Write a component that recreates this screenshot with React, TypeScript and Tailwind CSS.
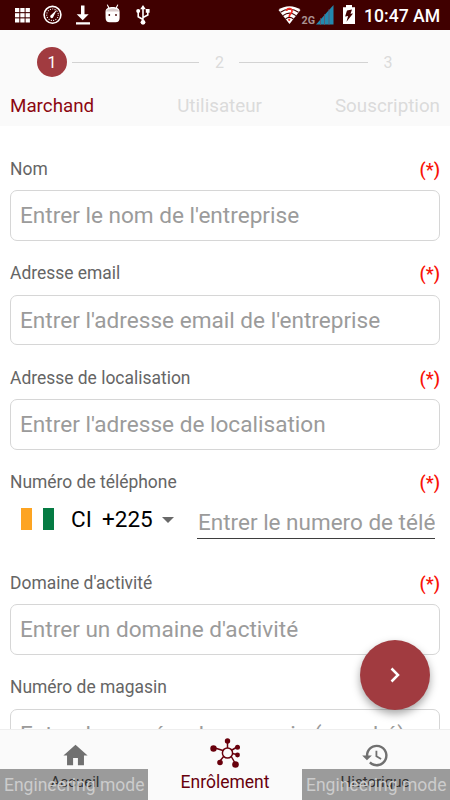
// App.tsx
// Merchant enrolment screen, first step of the wizard

import type { ReactNode } from 'react'

interface FieldProps {
  label: string
  placeholder: string
  required?: boolean
}

function FieldLabel({ label, required }: { label: string; required?: boolean }) {
  return (
    <div className="flex h-[21px] items-center justify-between pt-px text-[17.45px] leading-[21px] text-[#656565]">
      <span>{label}</span>
      {required && <span className="text-[18px] font-medium text-[#f91307]">(*)</span>}
    </div>
  )
}

function Field({ label, placeholder, required }: FieldProps) {
  return (
    <div className="mb-[22px]">
      <FieldLabel label={label} required={required} />
      <div className="mt-[11px] flex h-[50.5px] items-center rounded-[7px] border border-[#d6d6d6] px-[9px] pt-0.5 text-[22.6px] whitespace-nowrap text-[#9b9b9b]">
        {placeholder}
      </div>
    </div>
  )
}

function StatusBar() {
  return (
    <header className="flex h-[30px] shrink-0 items-center justify-between bg-[#400000] text-white">
      <svg width="160" height="30" viewBox="0 0 160 30" fill="#fff">
        {/* App grid */}
        {[15, 20.3, 25.6].map((x) =>
          [8, 13.2, 18.4].map((y) => <rect key={`${x}-${y}`} x={x} y={y} width="4.3" height="4.1" />),
        )}
        {/* Gauge */}
        <circle cx="52.5" cy="14.8" r="8.4" fill="none" stroke="#fff" strokeWidth="1.6" />
        <circle cx="52.5" cy="14.8" r="5.8" fill="none" stroke="#fff" strokeWidth="1.1" strokeDasharray="1 1.4" />
        <path d="m50.6 15.6 6.4-6-4 8a1.5 1.5 0 0 1-2.4-2z" />
        {/* Download */}
        <path d="M81 5.5h3.5v8.7h4.2l-6 6-6-6H81zM76 22.2h14v2.2H76z" />
        {/* Android head */}
        <path d="M105.500 12c0-2 1-3.500 2.600-4.200L106.800 4.800l.9-.4 1.700 3c2-.6 4.300-.6 6.300 0l1.700-3 .9.4-1.300 3c1.600.7 2.600 2.200 2.600 4.200v6q0 4.200-4 4.200h-6q-4 0-4-4.200z" />
        <path d="M106 11.500c0-4 13-4 13 0z" fill="#d9cccc" />
        <circle cx="109.300" cy="15" r=".9" fill="#400000" />
        <circle cx="116" cy="15" r=".9" fill="#400000" />
        {/* USB */}
        <path d="M143 8v14M143 19.500l-4.800-2.800v-5M143 17.500l4.800-2.600v-4" fill="none" stroke="#fff" strokeWidth="1.6" />
        <path d="m143 5 2.800 4.200h-5.600zM145.800 9h3.800v3.800h-3.800z" />
        <circle cx="138.200" cy="11" r="2" />
        <circle cx="143" cy="22.300" r="2.400" />
      </svg>
      <div className="flex items-center">
        <svg width="86" height="30" viewBox="276 0 86 30">
          {/* Wifi */}
          <path d="M278.500 10c6-5 16-5 22 0l-11 14z" fill="#fff" />
          <path d="M280.500 12.300c5.500-4 12.500-4 18 0M283 15.600c4-3 9-3 13 0M285.500 19c2.500-2 5.500-2 8 0" fill="none" stroke="#400000" strokeWidth="1.100" />
          <path d="M286.500 11c.5-3.500 6-3 5.500.5-.3 2-2.800 2.200-2.800 5.500" fill="none" stroke="#f12b24" strokeWidth="1.700" />
          <circle cx="289.200" cy="19.800" r="1.100" fill="#f12b24" />
          <text x="301.500" y="24" fontSize="11.500" fontWeight="700" fill="#a99191" textLength="13.500" lengthAdjust="spacingAndGlyphs">2G</text>
          {/* Signal */}
          <path d="M316 24.500 333.500 5v19.500z" fill="#2388ae" />
          <path d="M320.500 18v7M324.500 14v11M329 9v16" stroke="#70495a" strokeWidth=".7" />
          {/* Battery */}
          <path d="M346 5h6v2.200h3V24h-12V7.200h3z" fill="#fff" />
          <path d="m347 10.500 5-1-1.500 4.200 2.500-.3-6.500 8.300 1.600-5.700-3 .5z" fill="#400000" />
        </svg>
        <span className="w-[88px] pt-0.5 pl-0.5 text-[17.600px] font-medium whitespace-nowrap">10:47 AM</span>
      </div>
    </header>
  )
}

function Stepper() {
  return (
    <section className="h-24 shrink-0 bg-[#fafafa] px-2.5 pt-[17px] text-[#dbdbdb]">
      <div className="flex h-[30px] items-center pr-[47px] pl-[27px] text-[16px]">
        <span className="flex size-[30px] items-center justify-center rounded-full bg-[#a13b40] pt-px text-white">1</span>
        <span className="ml-[5px] h-px w-[127px] bg-[#d3d3d3]" />
        <span className="flex-1 pt-px pl-px text-center">2</span>
        <span className="h-px w-[129px] bg-[#d3d3d3]" />
        <span className="ml-[15px] w-[10px] pt-px text-center">3</span>
      </div>
      <div className="mt-[17px] flex justify-between text-[18.8px] leading-6">
        <span className="text-[#8c0710]">Marchand</span>
        <span className="translate-x-[5px]">Utilisateur</span>
        <span>Souscription</span>
      </div>
    </section>
  )
}

function PhoneField() {
  return (
    <div className="mb-[18px] h-[82.5px]">
      <FieldLabel label="Numéro de téléphone" required />
      <div className="mt-[6px] flex h-[41px] items-start px-[5px]">
        <div className="flex h-[42px] w-[182px] items-center pl-1.5 text-[22.5px] text-black">
          <span className="flex h-[22px] w-[33px] -translate-y-px justify-between">
            <span className="h-full w-[11px] bg-[#fda422]" />
            <span className="h-full w-[11px] bg-[#057b43]" />
          </span>
          <span className="ml-[17px] w-[31px]">CI</span>
          <span>+225</span>
          <svg className="ml-[9px]" width="12" height="6" viewBox="0 0 12 6" fill="#696969">
            <path d="M0 0h12L6 6z" />
          </svg>
        </div>
        <div className="mt-1.5 h-[34px] flex-1 overflow-hidden border-b border-[#3e3e3e] pt-px pl-px text-[22.500px] leading-8 whitespace-nowrap text-[#9b9b9b]">
          Entrer le numero de télé
        </div>
      </div>
    </div>
  )
}

function NavTab({ label, active, children }: { label: string; active?: boolean; children: ReactNode }) {
  return (
    <div className={`flex flex-1 flex-col items-center ${active ? 'text-[#68000c]' : 'text-[#707070]'}`}>
      <div className="flex h-[50px] items-center">{children}</div>
      <span className={`-mt-2 leading-5 ${active ? 'text-[17.500px] text-[#68000c]' : 'text-[15px] text-[#505050]'}`}>
        {label}
      </span>
    </div>
  )
}

function BottomNav() {
  return (
    <nav className="relative flex h-[71px] shrink-0 border-t border-[#eeeeee] bg-[#fafafa]">
      <NavTab label="Accueil">
        <svg width="29" height="29" viewBox="0 0 24 24" fill="currentColor">
          <path d="M10 20v-6h4v6h5v-8h3L12 3 2 12h3v8z" />
        </svg>
      </NavTab>
      <NavTab label="Enrôlement" active>
        <svg className="translate-x-0.5 -translate-y-[3px]" width="34" height="32" viewBox="0 0 34 32" fill="currentColor" stroke="currentColor" strokeWidth="1.500">
          <path d="M17.500 5v7M5 12l8 2.500M10 25l4-5M25 27l-4-7M27 11l-5 3M27 18.500l-5-1" />
          <circle cx="17.500" cy="17" r="5.100" fill="#fafafa" />
          <g stroke="none">
            <circle cx="17.500" cy="5" r="2.700" />
            <circle cx="3.500" cy="12.500" r="3.200" />
            <circle cx="10" cy="26.500" r="2.800" />
            <circle cx="25.500" cy="28.500" r="3.300" />
            <circle cx="27.500" cy="11.200" r="2.500" />
            <circle cx="27.500" cy="19" r="2.400" />
          </g>
        </svg>
      </NavTab>
      <NavTab label="Historique">
        <svg width="29" height="29" viewBox="0 0 24 24" fill="currentColor">
          <path d="M13 3a9 9 0 0 0-9 9H1l3.890 3.890.07.14L9 12H6a7 7 0 1 1 2.060 4.940l-1.420 1.420A9 9 0 1 0 13 3zm-1 5v5l4.280 2.540.72-1.210-3.500-2.080V8z" />
        </svg>
      </NavTab>
      {/* System overlays */}
      <span className="absolute bottom-0 left-0 h-[31px] w-[148px] bg-black/38 pl-1 text-[17.500px] leading-[33px] whitespace-nowrap text-[#cccccc]">
        Engineering mode
      </span>
      <span className="absolute right-0 bottom-0 h-[31px] w-[148px] bg-black/38 pl-1 text-[17.500px] leading-[33px] whitespace-nowrap text-[#cccccc]">
        Engineering mode
      </span>
    </nav>
  )
}

export default function App() {
  return (
    <div className="relative flex h-[800px] w-[450px] flex-col overflow-hidden bg-white font-[Roboto,sans-serif]">
      <StatusBar />
      <Stepper />
      <main className="min-h-0 flex-1 overflow-hidden px-2.5 pt-8">
        <Field label="Nom" placeholder="Entrer le nom de l'entreprise" required />
        <Field label="Adresse email" placeholder="Entrer l'adresse email de l'entreprise" required />
        <Field label="Adresse de localisation" placeholder="Entrer l'adresse de localisation" required />
        <PhoneField />
        <Field label="Domaine d'activité" placeholder="Entrer un domaine d'activité" required />
        <Field label="Numéro de magasin" placeholder="Entrer le numéro de magasin (marché)" />
      </main>
      <BottomNav />
      <button
        className="absolute right-5 bottom-[90px] flex size-[70px] items-center justify-center rounded-full bg-[#a13b40] shadow-[0_4px_9px_rgba(0,0,0,0.35)]"
        aria-label="Suivant"
      >
        <svg width="10" height="16" viewBox="0 0 10 16" fill="none" stroke="#fff" strokeWidth="2.500">
          <path d="m1.500 1.500 6.500 6.500-6.500 6.500" />
        </svg>
      </button>
    </div>
  )
}
